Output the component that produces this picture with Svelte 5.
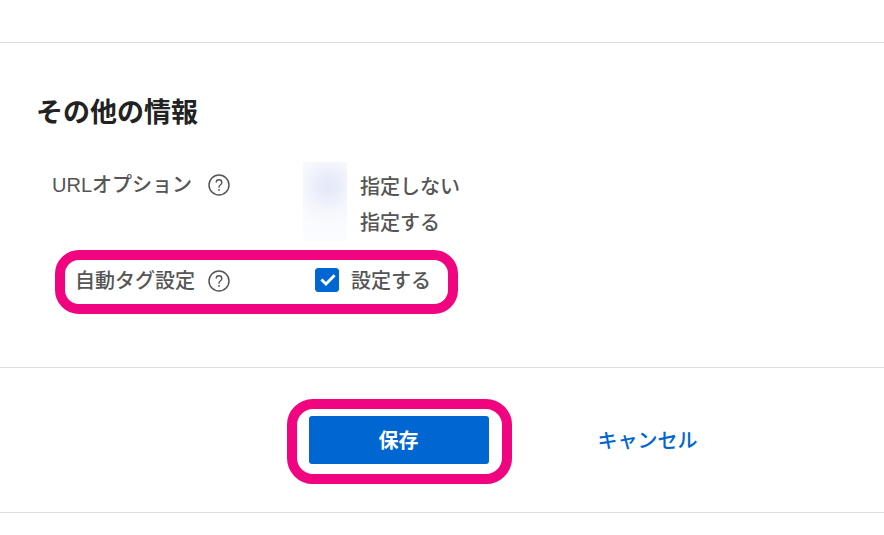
<script lang="ts">
  let urlOption: string = 'none';
  let autoTag: boolean = true;
</script>

{#snippet helpIcon()}
  <svg width="24" height="24" viewBox="0 0 24 24" fill="none" aria-hidden="true">
    <circle cx="12" cy="12" r="10" stroke="#555" stroke-width="1.5" />
    <path
      d="M9.2 9.5C9.2 7.8 10.3 6.8 12 6.8s2.8 1 2.8 2.6c0 1.3-.7 1.9-1.5 2.6-.9.7-1.3 1.2-1.3 2.2v.6"
      stroke="#555"
      stroke-width="1.4"
    />
    <circle cx="12" cy="17" r="0.9" fill="#555" />
  </svg>
{/snippet}

<main>
  <section class="other-info">
    <h2>その他の情報</h2>

    <div class="row">
      <span class="label latin" id="url-option">URLオプション</span>
      <button class="help" type="button" aria-label="ヘルプ">{@render helpIcon()}</button>
      <div class="options" role="radiogroup" aria-labelledby="url-option">
        <label>
          <input type="radio" name="url-option" value="none" bind:group={urlOption} />
          指定しない
        </label>
        <label>
          <input type="radio" name="url-option" value="custom" bind:group={urlOption} />
          指定する
        </label>
      </div>
    </div>

    <div class="row marked">
      <span class="label">自動タグ設定</span>
      <button class="help" type="button" aria-label="ヘルプ">{@render helpIcon()}</button>
      <label class="check">
        <span class="box">
          <input type="checkbox" bind:checked={autoTag} />
          {#if autoTag}
            <svg width="24" height="24" viewBox="0 0 24 24" fill="none" aria-hidden="true">
              <path d="M6.4 11.4l4.6 4.6 8.6-8.8" stroke="#fff" stroke-width="2.8" />
            </svg>
          {/if}
        </span>
        設定する
      </label>
    </div>
  </section>

  <footer>
    <div class="save-mark">
      <button class="save" type="button">保存</button>
    </div>
    <button class="cancel" type="button">キャンセル</button>
  </footer>
</main>

<style>
  :global(body) {
    margin: 0;
    background: #fff;
  }

  main {
    margin-top: 42px;
    border-top: 1px solid #ddd;
    color: #555;
    font-family: "Noto Sans CJK JP", sans-serif;
    font-size: 20px;
    font-weight: 500;
    line-height: 36px;
  }

  .other-info {
    padding: 48px 36px 53px;
  }

  h2 {
    margin: 0;
    color: #222;
    font-size: 27px;
    font-weight: 700;
    line-height: 40px;
  }

  button {
    padding: 0;
    border: 0;
    background: none;
    font: inherit;
    cursor: pointer;
  }

  .row {
    display: flex;
    align-items: flex-start;
    margin-top: 31px;
    padding-left: 16px;
  }

  .label {
    width: 155px;
  }

  .latin {
    margin-top: 5px;
    font-family: "Liberation Sans", "Noto Sans CJK JP", sans-serif;
  }

  .row .help {
    display: flex;
    align-items: center;
    height: 36px;
    margin-top: 5px;
  }

  .options {
    display: flex;
    flex-direction: column;
    margin-left: 72px;
    padding: 6px 0 1px;
    background: radial-gradient(circle at 25px 24px, #e4e9f8 0, #e8ecf9 9px, #f4f6fd 24px, #fafbff 40px, #fcfdff 80px)
      no-repeat 0 0 / 44px 100%;
  }

  .options label {
    display: flex;
    align-items: center;
  }

  .options input {
    width: 24px;
    height: 24px;
    margin: 0 23px 0 10px;
    opacity: 0;
  }

  .marked {
    box-sizing: border-box;
    align-items: center;
    width: 403px;
    height: 64px;
    margin: 9px 0 0 19px;
    padding: 0 0 4px 10px;
    border: 10px solid #f0047f;
    border-radius: 24px;
  }

  .marked .label {
    width: 132px;
  }

  .marked .help {
    margin-top: 2px;
  }

  .check {
    display: flex;
    align-items: center;
    gap: 12px;
    margin-left: 84px;
    white-space: nowrap;
  }

  .box {
    display: grid;
  }

  .box > :global(*) {
    grid-area: 1 / 1;
  }

  .box input {
    width: 24px;
    height: 24px;
    margin: 0;
    border: 1px solid #0066d1;
    border-radius: 3px;
    appearance: none;
  }

  .box input:checked {
    background: #0066d1;
  }

  .box svg {
    pointer-events: none;
  }

  footer {
    display: flex;
    align-items: center;
    justify-content: center;
    gap: 86px;
    padding: 31px 0 28px 100px;
    border-top: 1px solid #ddd;
    border-bottom: 1px solid #ddd;
  }

  .save-mark {
    padding: 7px 13px 10px 12px;
    border: 10px solid #f0047f;
    border-radius: 26px;
  }

  .save {
    width: 180px;
    height: 48px;
    border-radius: 3px;
    background: #0066d1;
    color: #fff;
    font-weight: 700;
  }

  .cancel {
    padding-bottom: 3px;
    color: #0066d1;
  }
</style>
